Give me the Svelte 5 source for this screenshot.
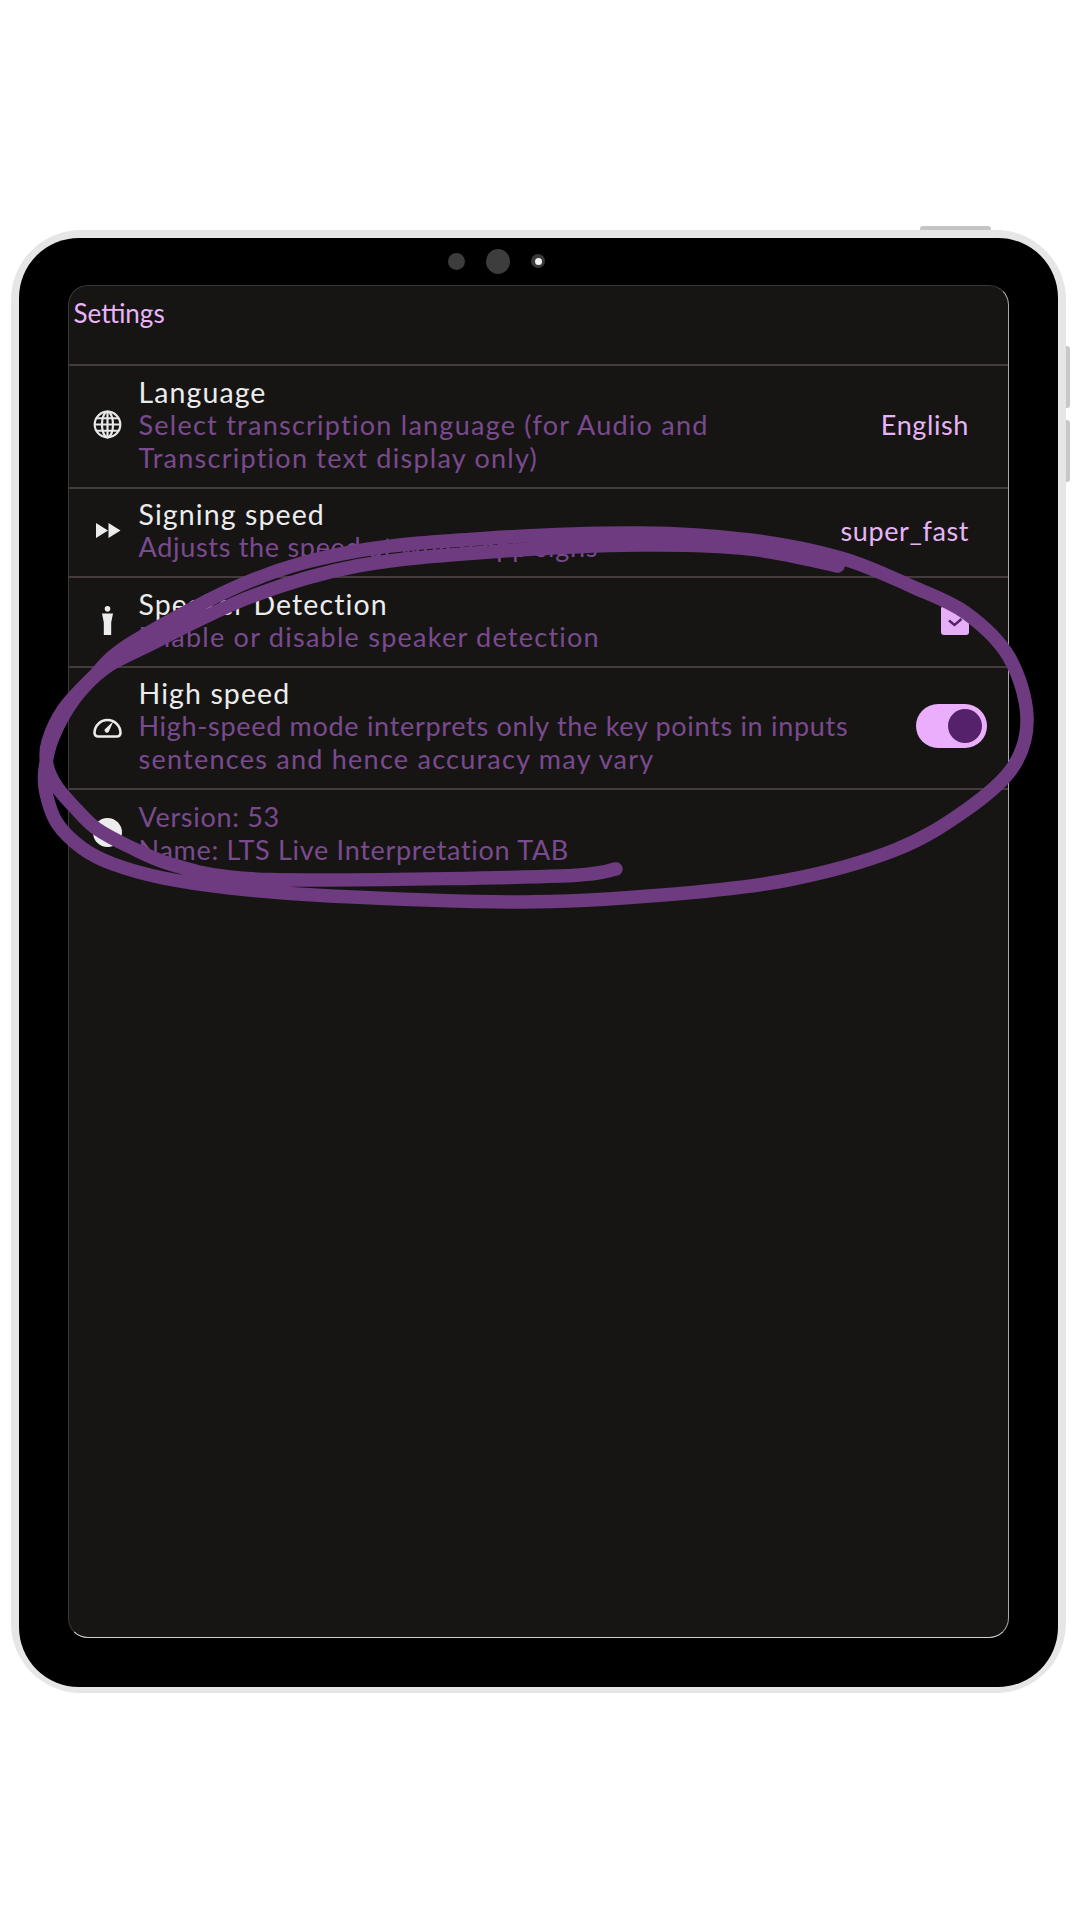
<script>
  // hand-drawn annotation loop, traced through the reference
  const scribble = [
    [616, 869], [560, 876], [330, 880], [230, 877], [170, 864], [130, 847], [97, 829], [77, 810],
    [57, 787], [47, 765], [48, 742], [63, 710], [92, 678], [133, 642], [250, 581], [357, 551],
    [490, 538], [640, 533], [750, 540], [841, 558], [913, 587], [966, 613], [1009, 657], [1027, 717],
    [1013, 767], [966, 810], [895, 850], [788, 880], [663, 895], [520, 902], [330, 896], [230, 888],
    [163, 878], [113, 864], [82, 848], [57, 823], [46, 793], [45, 770], [53, 737], [75, 698],
    [105, 668], [143, 648], [250, 597], [357, 566], [490, 552], [640, 545], [750, 549], [838, 566]
  ];

  function smooth(pts) {
    let d = `M${pts[0][0]} ${pts[0][1]}`;
    for (let i = 0; i < pts.length - 1; i++) {
      const p0 = pts[i - 1] || pts[i];
      const p1 = pts[i];
      const p2 = pts[i + 1];
      const p3 = pts[i + 2] || p2;
      const c1 = [p1[0] + (p2[0] - p0[0]) / 6, p1[1] + (p2[1] - p0[1]) / 6];
      const c2 = [p2[0] - (p3[0] - p1[0]) / 6, p2[1] - (p3[1] - p1[1]) / 6];
      d += ` C${c1[0]} ${c1[1]} ${c2[0]} ${c2[1]} ${p2[0]} ${p2[1]}`;
    }
    return d;
  }

  const loop = smooth(scribble);
</script>

<div class="page">
  <div class="device">
    <span class="btn-top"></span>
    <div class="btn-side">
      <span></span>
      <span></span>
    </div>

    <div class="bezel">
      <div class="cams">
        <span class="cam"></span>
        <span class="cam big"></span>
        <span class="cam lens"><i></i></span>
      </div>

      <div class="panel">
        <div class="head">Settings</div>

        <div class="row">
          <svg class="icon" viewBox="0 0 24 24" fill="none" stroke="#e8e8e8" stroke-width="1.8">
            <circle cx="12" cy="12" r="10.6" />
            <ellipse cx="12" cy="12" rx="4.6" ry="10.6" />
            <path d="M12 1.4v21.2M1.4 12h21.2M3 6.800h18M3 17.200h18" />
          </svg>
          <div class="text">
            <div class="title">Language</div>
            <div class="desc wide">Select transcription language (for Audio and</div>
            <div class="desc wide">Transcription text display only)</div>
          </div>
          <div class="value">English</div>
        </div>

        <div class="row">
          <svg class="icon" viewBox="0 0 29 16" fill="#ececec">
            <path d="M3 0.5 15 8 3 15.5ZM15.500 0.5 27.500 8 15.500 15.500Z" />
          </svg>
          <div class="text">
            <div class="title">Signing speed</div>
            <div class="desc">Adjusts the speed at which app signs</div>
          </div>
          <div class="value">super_fast</div>
        </div>

        <div class="row">
          <svg class="icon" viewBox="0 0 29 29" fill="#ececec">
            <circle cx="14.500" cy="2.800" r="2.800" />
            <path d="M9 7.500h11l-1.800 9v12.500h-7.400V16.500Z" />
          </svg>
          <div class="text">
            <div class="title">Speaker Detection</div>
            <div class="desc wide">Enable or disable speaker detection</div>
          </div>
          <span class="check">
            <svg viewBox="0 0 28 29" fill="none" stroke="#55216a" stroke-width="2.400">
              <path d="M8 14.500l5.500 4.500 7-6" />
            </svg>
          </span>
        </div>

        <div class="row">
          <svg class="icon" viewBox="0 0 29 23" fill="none" stroke="#ececec" stroke-width="2.600">
            <path d="M5 21.500h19a3.500 3.500 0 0 0 3.500-3.500 13 13 0 1 0-26 0 3.500 3.500 0 0 0 3.500 3.500Z" />
            <path d="M20.500 6l-7.800 7.400a2.300 2.300 0 1 0 3.200 3.200Z" fill="#ececec" stroke="none" />
          </svg>
          <div class="text">
            <div class="title">High speed</div>
            <div class="desc">High-speed mode interprets only the key points in inputs</div>
            <div class="desc wide">sentences and hence accuracy may vary</div>
          </div>
          <span class="toggle"><i></i></span>
        </div>

        <div class="row">
          <svg class="icon" viewBox="0 0 29 29" fill="#ececec">
            <circle cx="14.500" cy="14.500" r="14.500" />
          </svg>
          <div class="text">
            <div class="desc">Version: 53</div>
            <div class="desc">Name: LTS Live Interpretation TAB</div>
          </div>
        </div>
      </div>
    </div>
  </div>

  <svg class="scribble" viewBox="0 0 1080 1920" fill="none">
    <path d={loop} stroke="#6e3a80" stroke-width="13.5" stroke-linecap="round" stroke-linejoin="round" />
  </svg>
</div>

<style>
  :global(body) {
    background: #fff;
  }

  .page {
    position: relative;
    width: 1080px;
    height: 1920px;
    padding: 230px 14px 227px 11px;
    box-sizing: border-box;
    font-family: Lato, "Liberation Sans", sans-serif;
    overflow: hidden;
  }

  .device {
    position: relative;
    height: 100%;
    background: #e6e6e6;
    border-radius: 70px;
    padding: 8px 8px 6px;
    box-sizing: border-box;
  }

  .btn-top {
    position: absolute;
    top: -4px;
    right: 75px;
    width: 71px;
    height: 4px;
    background: #c4c4c4;
    border-radius: 3px 3px 0 0;
  }

  .btn-side {
    position: absolute;
    top: 116px;
    right: -4px;
    display: flex;
    flex-direction: column;
    gap: 12px;
  }

  .btn-side span {
    display: block;
    width: 4px;
    height: 62px;
    background: #c8c8c8;
    border-radius: 0 3px 3px 0;
  }

  .bezel {
    height: 100%;
    background: #000;
    border-radius: 60px;
    padding: 0 49px 49px 48.500px;
    box-sizing: border-box;
    display: flex;
    flex-direction: column;
  }

  .cams {
    height: 47px;
    flex: none;
    display: flex;
    align-items: center;
    justify-content: center;
    gap: 21px;
    padding-right: 83px;
    padding-bottom: 1px;
    box-sizing: border-box;
  }

  .cam {
    width: 17px;
    height: 17px;
    border-radius: 50%;
    background: #3d3d3d;
  }

  .cam.big {
    width: 24px;
    height: 25px;
  }

  .cam.lens {
    width: 14px;
    height: 14px;
    background: #3a3a3a;
    display: flex;
    align-items: center;
    justify-content: center;
  }

  .lens i {
    width: 7px;
    height: 7px;
    border-radius: 50%;
    background: #f0f0f0;
  }

  .panel {
    flex: 1;
    background: #161514;
    border: 1px solid #3b3938;
    border-right-color: #a9a8a7;
    border-bottom-color: #cfcfce;
    border-radius: 20px;
  }

  .head {
    height: 78px;
    padding: 11px 0 0 5px;
    box-sizing: border-box;
    font-size: 26px;
    line-height: 33px;
    color: #eab4f8;
  }

  .row {
    display: flex;
    align-items: center;
    padding: 9.500px 39px 13px 24px;
    border-top: 2px solid #443c3c;
  }

  .icon {
    flex: none;
    width: 29px;
    height: 29px;
    margin-right: 17px;
  }

  .text {
    font-size: 27px;
    line-height: 33px;
    letter-spacing: 0.7px;
  }

  .title {
    color: #ececec;
    font-size: 28.500px;
    line-height: 32px;
    letter-spacing: 1.100px;
  }

  .desc {
    color: #7a4a8e;
  }

  .desc.wide {
    letter-spacing: 1.250px;
  }

  .value {
    margin-left: auto;
    font-size: 27px;
    line-height: 33px;
    letter-spacing: 0.6px;
    color: #e7b4f6;
  }

  .check {
    margin-left: auto;
    width: 28px;
    height: 29px;
    background: #e7aef8;
    border-radius: 3px;
  }

  .check svg {
    display: block;
    width: 100%;
    height: 100%;
  }

  .toggle {
    margin-left: auto;
    margin-right: -18px;
    width: 71px;
    height: 44px;
    padding-right: 2px;
    box-sizing: border-box;
    border-radius: 22px;
    background: #eaaefc;
    display: flex;
    align-items: center;
    justify-content: flex-end;
  }

  .toggle i {
    width: 34px;
    height: 34px;
    margin-right: 3px;
    border-radius: 50%;
    background: #55216a;
  }

  .scribble {
    position: absolute;
    inset: 0;
    width: 1080px;
    height: 1920px;
    pointer-events: none;
  }
</style>
